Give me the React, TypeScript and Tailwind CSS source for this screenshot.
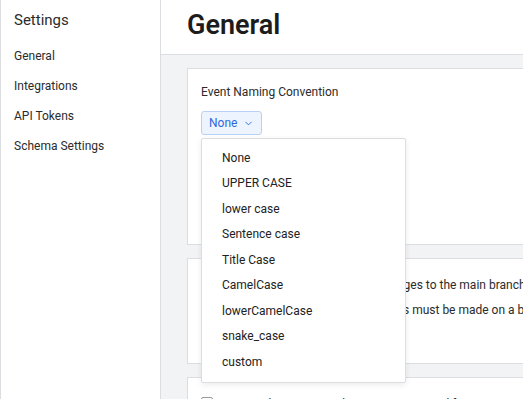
import { ChevronDown } from 'lucide-react'

const NAV_ITEMS = ['General', 'Integrations', 'API Tokens', 'Schema Settings']

const NAMING_OPTIONS = [
  'None',
  'UPPER CASE',
  'lower case',
  'Sentence case',
  'Title Case',
  'CamelCase',
  'lowerCamelCase',
  'snake_case',
  'custom',
]

function Sidebar() {
  return (
    <aside className="w-[161px] shrink-0 h-full bg-white border-l border-r border-[#dcdde0]">
      <h2 className="pl-[13px] pt-[10px] text-[15px] leading-[20px] text-[#2b2b2b]">Settings</h2>
      <nav className="mt-[11px] flex flex-col">
        {NAV_ITEMS.map((item) => (
          <div key={item} className="pl-[13px] h-[30px] flex items-center text-[12px] text-[#2b2b2b]">
            {item}
          </div>
        ))}
      </nav>
    </aside>
  )
}

function NamingDropdown() {
  return (
    <div className="relative inline-block">
      <button className="h-[24px] px-[7px] flex items-center gap-[6px] rounded-[3px] border border-[#b9d1f7] bg-[#eef4fe] text-[12px] text-[#2e68d8]">
        None
        <ChevronDown size={11} strokeWidth={2} />
      </button>
      <div className="absolute left-0 top-[27px] w-[205px] bg-white border border-[#dcdde0] rounded-[2px] shadow-[0_2px_6px_rgba(0,0,0,0.08)] pt-[6px] pb-[7px] z-10">
        {NAMING_OPTIONS.map((opt) => (
          <div key={opt} className="h-[25.5px] pl-[20px] flex items-center text-[12px] text-[#222]">
            {opt}
          </div>
        ))}
      </div>
    </div>
  )
}

function Card({ className, children }: { className?: string; children: React.ReactNode }) {
  return (
    <section className={`w-[400px] bg-white border border-[#dcdde0] px-[13px] ${className ?? ''}`}>
      {children}
    </section>
  )
}

export default function App() {
  return (
    <div className="h-screen w-full flex overflow-hidden bg-[#f2f3f5] font-['Roboto',sans-serif]">
      <Sidebar />
      <main className="flex-1 min-w-0 flex flex-col">
        <header className="h-[55px] shrink-0 bg-white border-b border-[#dcdde0] pl-[26px] flex items-center">
          <h1 className="text-[27px] font-semibold text-[#1c1c1c] -mt-[3px]">General</h1>
        </header>
        <div className="pl-[26px] pt-[13px] flex flex-col gap-[13px]">
          <Card className="h-[177px] pt-[16px]">
            <p className="text-[12px] leading-[14px] text-[#2b2b2b]">Event Naming Convention</p>
            <div className="mt-[11px]">
              <NamingDropdown />
            </div>
          </Card>
          <Card className="h-[106px] pt-[19px]">
            <div className="flex flex-col gap-[11px] text-[12px] leading-[14px] text-[#2b2b2b] whitespace-nowrap">
              <p>Require approval before merging changes to the main branch</p>
              <p>When this is enabled, all event changes must be made on a branch</p>
            </div>
          </Card>
          <Card className="h-[60px] pt-[19px]">
            <div className="flex items-start gap-[8px] text-[12px] leading-[14px] text-[#2b2b2b] whitespace-nowrap">
              <span className="w-[12px] h-[12px] shrink-0 border border-[#9a9a9a] rounded-[2px]" />
              Require descriptions when creating or modifying events
            </div>
          </Card>
        </div>
      </main>
    </div>
  )
}
